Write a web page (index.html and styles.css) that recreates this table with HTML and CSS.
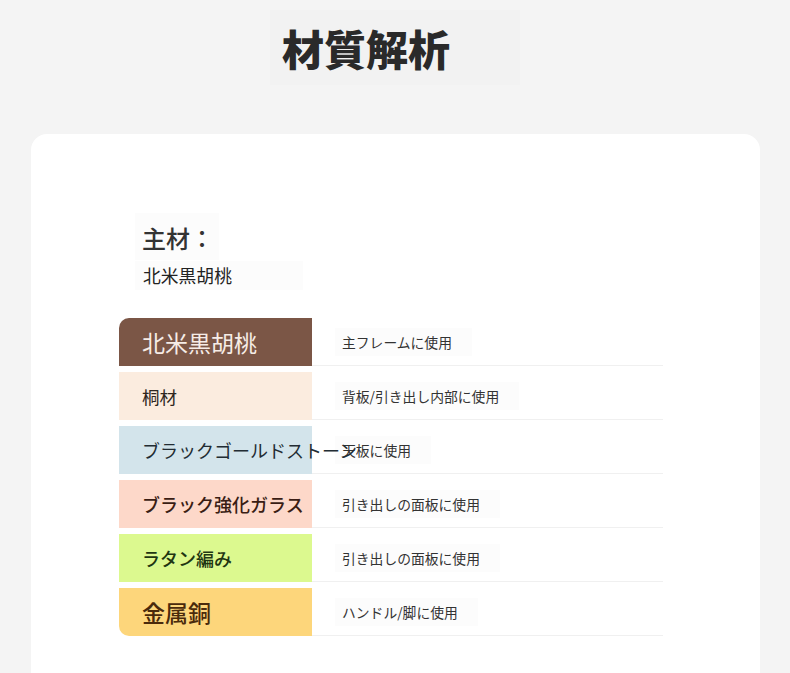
FILE: index.html
```html
<!DOCTYPE html>
<html lang="ja">
<head>
<meta charset="utf-8">
<link rel="stylesheet" href="styles.css">
</head>
<body>
<header class="header">
  <h1 class="title">材質解析</h1>
</header>
<main class="card">
  <section class="main-material">
    <div class="label">主材：</div>
    <div class="value">北米黒胡桃</div>
  </section>
  <div class="table">
    <div class="row">
      <div class="name walnut">北米黒胡桃</div>
      <div class="use"><span>主フレームに使用</span></div>
    </div>
    <div class="row">
      <div class="name paulownia">桐材</div>
      <div class="use"><span>背板/引き出し内部に使用</span></div>
    </div>
    <div class="row">
      <div class="name stone">ブラックゴールドストーン</div>
      <div class="use"><span>天板に使用</span></div>
    </div>
    <div class="row">
      <div class="name glass">ブラック強化ガラス</div>
      <div class="use"><span>引き出しの面板に使用</span></div>
    </div>
    <div class="row">
      <div class="name rattan">ラタン編み</div>
      <div class="use"><span>引き出しの面板に使用</span></div>
    </div>
    <div class="row">
      <div class="name copper">金属銅</div>
      <div class="use"><span>ハンドル/脚に使用</span></div>
    </div>
  </div>
</main>
</body>
</html>
```
FILE: styles.css
```css
* { box-sizing: border-box; }
html, body {
  margin: 0;
  padding: 0;
  background: #f4f4f4;
  font-family: "Noto Sans CJK JP", "Noto Sans", sans-serif;
  color: #333;
}
.header {
  padding-top: 10px;
  padding-left: 270px;
}
.title {
  margin: 0;
  width: 250px;
  height: 75px;
  line-height: 75px;
  padding-left: 12px;
  font-size: 42px;
  font-weight: 900;
  color: #2a2a2a;
  background: #f2f2f2;
}
.card {
  margin: 49px 30px 0 31px;
  background: #fff;
  border-radius: 16px 16px 0 0;
  padding: 79px 0 60px 88px;
  min-height: 560px;
}
.main-material {
  margin-left: 16px;
  width: 168px;
}
.label {
  height: 47px;
  line-height: 50px;
  padding-left: 7px;
  font-size: 24px;
  font-weight: 500;
  color: #333;
  background: #fcfcfc;
  width: 84px;
}
.value {
  margin-top: 1px;
  height: 29px;
  line-height: 29px;
  padding-left: 8px;
  font-size: 17.8px;
  color: #222;
  background: #fcfcfc;
}
.table {
  margin-top: 28px;
  width: 544px;
  display: flex;
  flex-direction: column;
  gap: 6px;
}
.row {
  display: grid;
  grid-template-columns: 193px 351px;
  height: 48px;
}
.name {
  display: flex;
  align-items: center;
  padding-left: 23px;
  white-space: nowrap;
  font-size: 18px;
  font-weight: 500;
  color: #222;
  position: relative;
  z-index: 1;
}
.use {
  display: flex;
  align-items: center;
  padding-left: 23px;
  border-bottom: 1px solid #f0f0f0;
  font-size: 13.8px;
  color: #333;
}
.use span {
  background: #fcfcfc;
  padding: 4px 20px 4px 7px;
}
.walnut {
  background: #7b5646;
  color: #f6ece6;
  font-size: 23px;
  font-weight: 400;
  border-top-left-radius: 10px;
}
.paulownia { background: #fbecdf; color: #2e2620; font-size: 17.5px; font-weight: 400; }
.stone { background: #d3e4eb; color: #222c33; font-weight: 400; }
.glass { background: #fdd8c9; color: #3a1d14; }
.rattan { background: #dcf98f; color: #1f3612; }
.copper {
  background: #fdd67b;
  color: #4a2a0c;
  font-size: 23px;
  border-bottom-left-radius: 10px;
}
```
